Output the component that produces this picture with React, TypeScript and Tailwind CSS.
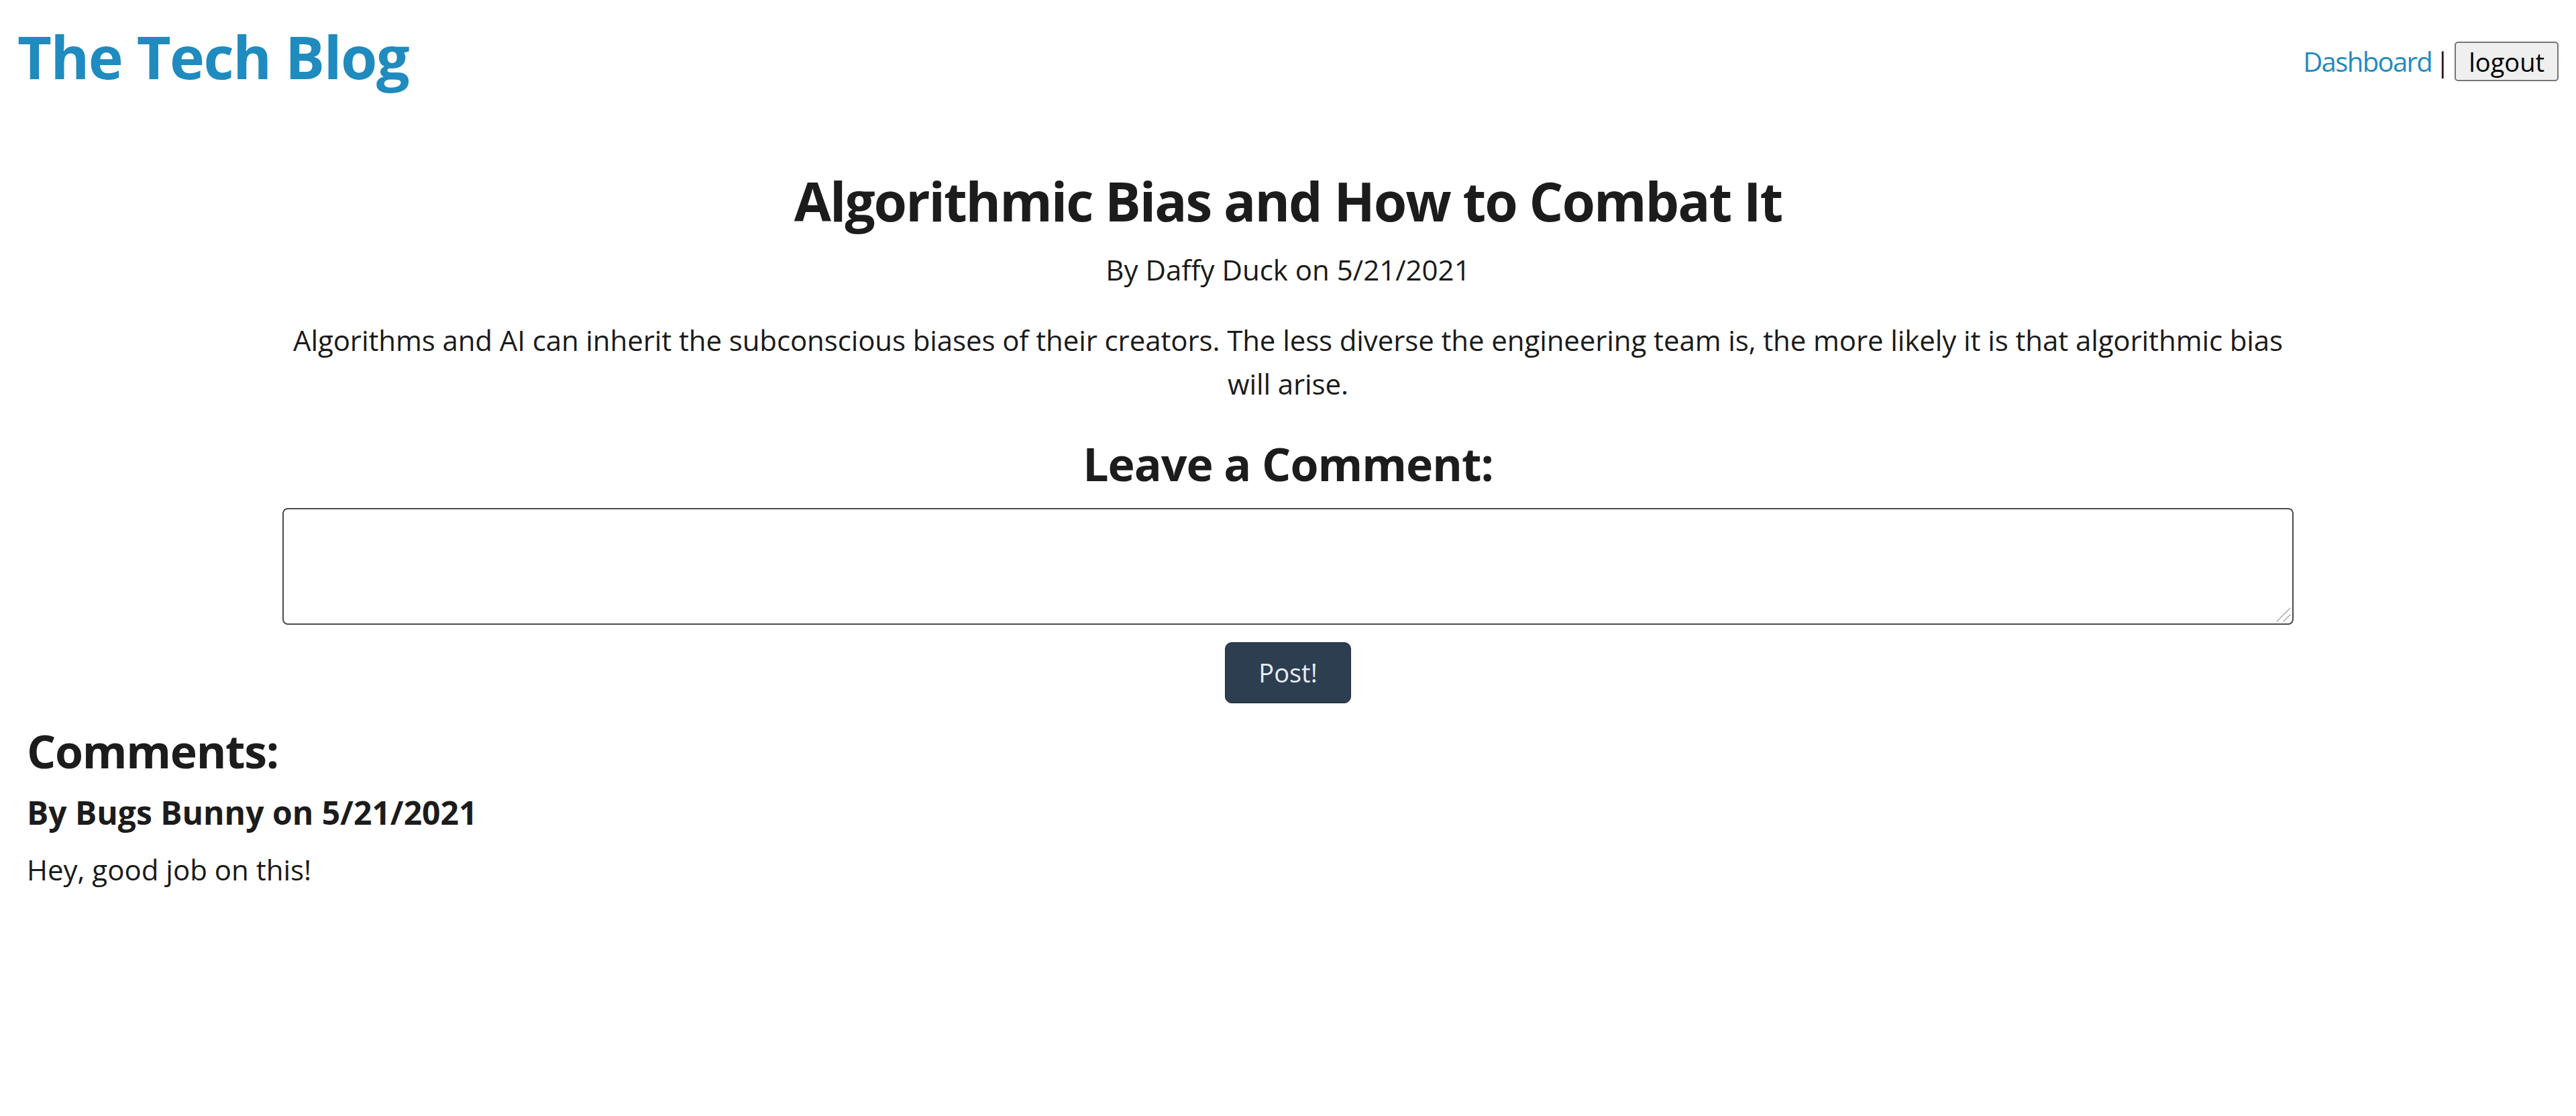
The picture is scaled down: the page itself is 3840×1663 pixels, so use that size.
import { ReactElement } from "react";

type CommentType = {
  author: string,
  date: string,
  body: string,
}

const post = {
  title: "Algorithmic Bias and How to Combat It",
  author: "Daffy Duck",
  date: "5/21/2021",
  body: "Algorithms and AI can inherit the subconscious biases of their creators. The less diverse the engineering team is, the more likely it is that algorithmic bias will arise.",
};

const comments: CommentType[] = [
  { author: "Bugs Bunny", date: "5/21/2021", body: "Hey, good job on this!" },
];

const Header = (): ReactElement => {
  return (
    <header className="flex items-start justify-between px-[26px] pt-[31px]">
      <h1 className="text-[88px] leading-[106px] font-bold tracking-[-1.5px] text-[#1f8bbe]">The Tech Blog</h1>
      <nav className="mt-[29px] flex items-center text-[40px] leading-[63px] text-[#1a1a1a]">
        <a href="#" className="tracking-[-1.6px] text-[#1f8bbe]">Dashboard</a>
        <span className="ml-[5px] mr-[7px]">|</span>
        <button className="h-[59px] rounded-[5px] border-2 border-[#767676] bg-[#efefef] px-[19px] text-[38px] leading-none text-black">
          logout
        </button>
      </nav>
    </header>
  );
};

const CommentBox = (): ReactElement => {
  return (
    <div className="relative mt-[25px] h-[174px] w-full">
      <textarea className="h-full w-full resize-none rounded-[8px] border-2 border-[#4a4a4a] bg-white p-2 text-[42px]" />
      {/* resize grip, drawn at page zoom */}
      <svg className="pointer-events-none absolute bottom-[3px] right-[3px]" width="24" height="24" viewBox="0 0 24 24">
        <line x1="2" y1="22" x2="22" y2="2" stroke="#8a8a8a" strokeWidth="1.5" strokeDasharray="2 1" />
        <line x1="12" y1="22" x2="22" y2="12" stroke="#8a8a8a" strokeWidth="1.5" strokeDasharray="2 1" />
      </svg>
    </div>
  );
};

const CommentItem = ({ item }: { item: CommentType }): ReactElement => {
  return (
    <li>
      <h4 className="mt-[22px] text-[48px] leading-[58px] font-bold text-[#1c1c1c]">By {item.author} on {item.date}</h4>
      <p className="mt-[24px] text-[42px] leading-[63px] text-[#1a1a1a]">{item.body}</p>
    </li>
  );
};

function App(): ReactElement {
  return (
    <div className="min-h-screen bg-white font-['Open_Sans',sans-serif]">
      <Header />
      <main className="mx-auto mt-[114px] flex w-[2998px] flex-col items-center text-center">
        <h2 className="text-[80px] leading-[96px] font-bold tracking-[-2px] text-[#1c1c1c]">{post.title}</h2>
        <p className="mt-[23px] text-[42px] leading-[63px] text-[#1a1a1a]">By {post.author} on {post.date}</p>
        <p className="mt-[41px] text-[42px] leading-[65px] tracking-[-0.1px] text-[#1a1a1a]">{post.body}</p>
        <h3 className="mt-[46px] text-[68px] leading-[82px] font-bold tracking-[-1px] text-[#1c1c1c]">Leave a Comment:</h3>
        <CommentBox />
        <button className="mt-[26px] h-[91px] w-[188px] rounded-[10px] border border-[#1f2b38] bg-[#2d3e50] text-[38px] text-[#e6eef3]">
          Post!
        </button>
      </main>
      <section className="mt-[30px] px-[40px]">
        <h3 className="text-[68px] leading-[82px] font-bold tracking-[-1.3px] text-[#1c1c1c]">Comments:</h3>
        <ul>
          {comments.map((c, i) => <CommentItem key={i} item={c} />)}
        </ul>
      </section>
    </div>
  );
}

export default App;
